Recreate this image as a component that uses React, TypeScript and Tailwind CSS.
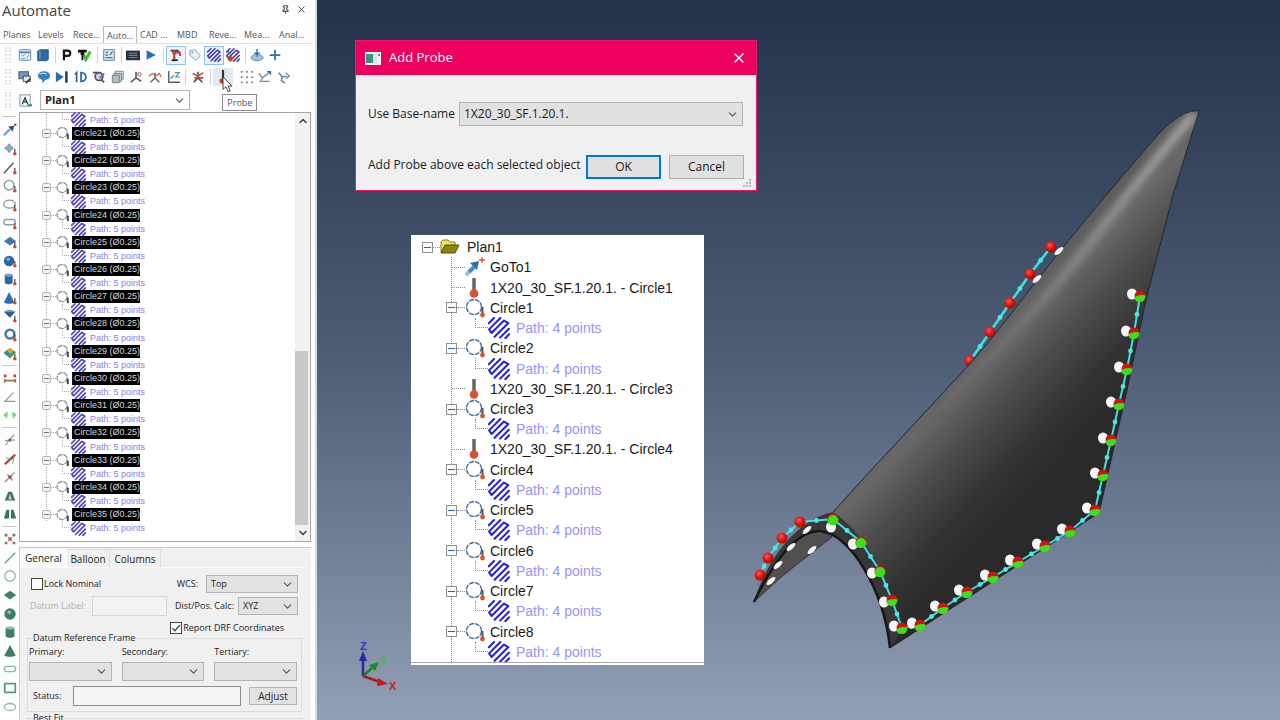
import type { ReactNode } from "react"
import { ChevronDown, ChevronUp, Pin, X } from "lucide-react"

/* ---------- small shared pieces ---------- */

function Icon({ size = "size-4", children }: { size?: string; children: ReactNode }) {
  return (
    <svg viewBox="0 0 16 16" className={`${size} shrink-0`} fill="none" aria-hidden="true">
      {children}
    </svg>
  )
}

// hatch pattern used for every scan path
function PathGlyph({ color, width = 1.8 }: { color: string; width?: number }) {
  return (
    <g stroke={color} strokeWidth={width} strokeLinecap="round" strokeLinejoin="round">
      <path d="M.6 4.600 4.400.8M9 .8.8 9l1.800 2.600 9-9 3.200 1.800-10 10M8.800 15l6.400-6.400M12.600 15.400l2.800-2.800" />
    </g>
  )
}

function Combo({ id, value, className, textClass = "text-[9px]", label }: {
  id: string
  value: string
  className: string
  textClass?: string
  label?: string
}) {
  return (
    <div className={`flex items-center border border-[#b4b4b4] ${className}`}>
      <select
        id={id}
        aria-label={label}
        defaultValue={value}
        className={`min-w-0 flex-1 appearance-none bg-transparent pl-1 text-[#1c1c1c] outline-none ${textClass}`}
      >
        <option>{value}</option>
      </select>
      <ChevronDown className="pointer-events-none mr-[3px] size-[13px] shrink-0 text-[#555]" strokeWidth={2} />
    </div>
  )
}

function Check({ id, label, checked = false }: { id: string; label: string; checked?: boolean }) {
  return (
    <label htmlFor={id} className="flex items-center gap-px text-[#222]">
      <span className="grid size-3 place-items-center">
        <input
          id={id}
          type="checkbox"
          defaultChecked={checked}
          className="peer col-start-1 row-start-1 size-3 appearance-none border border-[#444] bg-white"
        />
        <svg viewBox="0 0 12 12" className="pointer-events-none col-start-1 row-start-1 hidden size-3 peer-checked:block" fill="none" stroke="#444" strokeWidth="1.3">
          <path d="M2.5 6.2 5 8.7 10 3" />
        </svg>
      </span>
      {label}
    </label>
  )
}

/* ---------- toolbar icons ---------- */

const blue = "#2f6ea8"
const gray = "#6f7f86"
const red = "#c8402f"

const topIcons: Record<string, ReactNode> = {
  plan: <><rect x="1.5" y="2" width="13" height="12" rx="1" fill="#e8f2fa" stroke="#4b7da5" /><path d="M2 5h12" stroke="#4b7da5" strokeWidth="2" /><path d="M4 8l1.5 1.5L8 7M9.500 12l3-4M4 12h4" stroke="#5a8bb0" /></>,
  book: <><path d="M2 3.500 4.500 2H14v11l-2 1.500H2z" fill="#2b6ca8" stroke="#1d4e7f" /><path d="M4.500 2v11" stroke="#83b2da" /></>,
  p: <path d="M4.500 14V3h4.200c4 0 4 6 0 6H5" stroke="#111" strokeWidth="2.500" />,
  flag: <><path d="M6 7l3 6 5-9" stroke="#43b543" strokeWidth="3.500" /><path d="M0 2h10v3H7v3H6v6H4V8H3V5H0z" fill="#111" /></>,
  report: <><rect x="2" y="2" width="12" height="12" fill="#dcebf5" stroke="#4f7590" /><path d="M4 5h3M4 11h8M9 8l3-4M4 8h3" stroke="#4f7590" strokeWidth="1.500" /></>,
  film: <><rect x="0" y="3" width="16" height="11" fill="#27313c" /><path d="M3 6h10M3 8.500h10M3 11h10" stroke="#6da0cf" /></>,
  play: <path d="M3 2.500 13.500 8 3 13.500z" fill={blue} />,
  robot: <><path d="M6 14V5h6l1 4" stroke="#a5522e" strokeWidth="2.500" /><path d="M2 3h9" stroke="#333" strokeWidth="2" /><circle cx="6" cy="5" r="2.500" fill={red} /><path d="M3 14h7" stroke="#222" strokeWidth="2" /></>,
  tag: <><path d="M2 3l6-1 6 7-5 5-7-6z" fill="#e6f0f8" stroke="#6f9cbf" /><circle cx="5" cy="5" r="1" fill="#6f9cbf" /></>,
  path: <PathGlyph color="#4b36b0" />,
  pathProbe: <><PathGlyph color="#4b36b0" /><path d="M1 3l4 4" stroke="#2d8a4b" strokeWidth="2" /><circle cx="5" cy="12" r="3" fill={red} /></>,
  probeStand: <><ellipse cx="8" cy="11" rx="7" ry="3.500" fill="#9fc3df" stroke="#5c8cb3" /><path d="M8 1v9M5 6h6" stroke={blue} strokeWidth="1.500" /></>,
  plus: <path d="M8 2v12M2 8h12" stroke={blue} strokeWidth="2" />,
  window: <><rect x="1" y="2" width="11" height="8" fill="#6f98ba" stroke="#35526b" /><rect x="6" y="7" width="8" height="6" fill="#dfe6ea" stroke="#444" /><path d="M9 15l5-5" stroke="#333" strokeWidth="2" /></>,
  bubble: <><ellipse cx="8" cy="6.500" rx="7" ry="5" fill="#3682bf" /><path d="M6 10v5l4-4" fill="#3682bf" /><path d="M3 5c2-2 6-2 8 0" stroke="#b8dcf3" strokeWidth="1.500" /></>,
  step: <><path d="M1 2 10 8 1 14z" fill="#2b6ca8" /><path d="M13 1.500v13" stroke="#25496b" strokeWidth="3" /></>,
  oneD: <path d="M1 5 3 3v11M8 3v10c7.500 0 7.500-10 0-10z" stroke="#2b6ca8" strokeWidth="2" />,
  lens: <><circle cx="8" cy="7.500" r="4.500" fill="#cbd0e6" stroke="#5a4a66" strokeWidth="1.800" /><path d="M1 3h6M10 11l4 3" stroke="#6b4652" strokeWidth="1.800" /><path d="M9 9l5-5" stroke="#6d5fc4" strokeWidth="2" /></>,
  boxes: <><path d="M5 1.500h9v9H5z" fill="#d4dde2" stroke={gray} /><path d="M3 4h9v9H3z" fill="#c2ced6" stroke={gray} /><path d="M1.500 6h8v8.500h-8z" fill="#aebdc8" stroke={gray} /></>,
  axes: <><path d="M8 2v7L2 14M8 9l6 4" stroke="#4c565c" strokeWidth="1.800" /><circle cx="12" cy="5" r="2" stroke={red} /></>,
  axesFan: <><path d="M8 3v6l-5 5M8 9l5 5" stroke="#5c5450" strokeWidth="1.500" /><path d="M1 7l4-3 4 3 4-3 2 4" stroke="#d06a58" strokeWidth="1.500" /></>,
  graph: <><path d="M2 1v13h13" stroke="#4c6470" strokeWidth="1.600" /><path d="M4 10l4-4M9 3h5l-4 5h5" stroke="#3e95a8" strokeWidth="1.300" /></>,
  axesOrigin: <><path d="M8 2v7L3 14M8 9l5 5" stroke="#4c4c4c" strokeWidth="1.800" /><path d="M2 4l6 3 6-4M4 9h10" stroke={red} strokeWidth="1.800" /></>,
  probe: <><path d="M8 0v11" stroke="#333" strokeWidth="2.500" /><circle cx="7" cy="12.500" r="3" fill={red} /></>,
  dots: <path d="M1 1h2v2H1zM7 1h2v2H7zM13 1h2v2h-2zM1 7h2v2H1zM7 7h2v2H7zM13 7h2v2h-2zM1 13h2v2H1zM7 13h2v2H7zM13 13h2v2h-2z" fill="#6a8a78" />,
  cutA: <><path d="M1 4l4 5 9-7M6 8l-4 6M4 13h9" stroke="#7b8a90" strokeWidth="1.500" /><path d="M10 1h5v5z" fill={blue} /></>,
  cutB: <><path d="M2 3l4 5 5-1M6 8l-1 4 4 3" stroke="#4b84a6" strokeWidth="1.600" /><path d="M10 3l4 4-4 3" stroke="#6d8fa5" strokeWidth="1.600" /></>,
  sheet: <><rect x="2" y="2" width="11" height="12" fill="#f4f8fa" stroke="#7b96a8" /><path d="M4.500 12 7.500 5l3 7M5.500 9.500h4" stroke="#333" strokeWidth="1.300" /><path d="M10 13h5" stroke="#2d9a5b" strokeWidth="2" /></>,
}

const rowOne = ["plan", "book", "|", "p", "flag", "|", "report", "|", "film", "play", "|", "robot", "tag", "path", "pathProbe", "|", "probeStand", "plus"]
const rowTwo = ["window", "bubble", "step", "oneD", "lens", "boxes", "axes", "axesFan", "graph", "|", "axesOrigin", "|", "probe", "dots", "cutA", "cutB"]
const pressed = ["robot", "path"]

function Grip() {
  return <span className="mx-[5px] h-4 w-[6px] shrink-0 border-x-2 border-dotted border-[#e0e0e0]" />
}

function Toolbar({ items, width }: { items: string[]; width: string }) {
  return (
    <div className="flex h-[22px] items-center">
      <Grip />
      <div className={`flex items-center ${width}`}>
        {items.map((name, i) => {
          if (name === "|") {
            return (
              <span key={i} className="flex w-[6px] justify-center">
                <span className="h-4 w-px bg-[#d2d2d2]" />
              </span>
            )
          }
          if (name === "probe") {
            return (
              <div key={i} className="relative z-10 mr-1 w-5">
                <button aria-label="Probe" className="flex h-[18px] w-full items-center justify-center bg-[#dfeaf4]">
                  <Icon size="size-[14px]">{topIcons.probe}</Icon>
                </button>
                <svg viewBox="0 0 12 19" className="absolute left-[9px] top-2 z-20 h-[17px] w-[11px]" aria-hidden="true">
                  <path d="M1 1v14l3.200-3 2.300 5.500 2.500-1-2.300-5.300H11z" fill="#fff" stroke="#333" />
                </svg>
                <span role="tooltip" className="absolute left-[9px] top-[26px] border border-[#8c8c8c] bg-white px-1 text-[9px] leading-[15px] text-[#555]">
                  Probe
                </span>
              </div>
            )
          }
          return (
            <button
              key={i}
              aria-label={name}
              className={`flex h-[19px] min-w-0 flex-1 items-center justify-center ${pressed.includes(name) ? "border border-[#8fc4ea] bg-[#e9f4fc]" : ""}`}
            >
              <Icon size="size-[14px]">{topIcons[name]}</Icon>
            </button>
          )
        })}
      </div>
    </div>
  )
}

/* ---------- vertical strip ---------- */

const probeTip = <><path d="M13.500 8v4" stroke="#555" strokeWidth="1.500" /><circle cx="13.500" cy="13.500" r="2" fill="#d2452f" /></>
const green = "#3d7f68"
const paleGreen = "#8fb8a8"

const stripGroups: [string, ReactNode][][] = [
  [
    ["goto", <><path d="M1 14 8 7" stroke="#6ba3d0" strokeWidth="2.500" /><path d="M6 4l7-1-2 7z" fill="#245c93" /><circle cx="14" cy="2" r="1.500" fill={red} /></>],
    ["point", <><path d="M7 2v10M2 7h10" stroke="#7f9bad" strokeWidth="3" /><circle cx="7" cy="7" r="3.500" fill="#8fa8b8" />{probeTip}</>],
    ["line", <><path d="M1 14 12 2" stroke="#555" strokeWidth="1.500" />{probeTip}</>],
    ["circle", <><circle cx="7" cy="7" r="5.500" stroke="#7e97a3" strokeWidth="1.500" />{probeTip}</>],
    ["ellipse", <><ellipse cx="7.500" cy="7" rx="6.500" ry="4.500" stroke="#7e97a3" strokeWidth="1.500" />{probeTip}</>],
    ["slot", <><rect x="1" y="4" width="13" height="6" rx="3" stroke="#8b9ca5" strokeWidth="1.500" />{probeTip}</>],
    ["plane", <><path d="M8 2l7 5-7 5-7-5z" fill="#3b7ab3" />{probeTip}</>],
    ["sphere", <><circle cx="7" cy="8" r="6" fill="#2a68a3" /><circle cx="6" cy="6" r="2" fill="#79b0de" />{probeTip}</>],
    ["cylinder", <><path d="M2 3.500v9c2 2 7 2 9 0v-9z" fill="#2a68a3" /><ellipse cx="6.500" cy="3.500" rx="4.500" ry="1.800" fill="#6fa4d1" />{probeTip}</>],
    ["cone", <><path d="M7 1 13 13c-3 2-9 2-12 0z" fill="#2f6ea8" />{probeTip}</>],
    ["surface", <><path d="M1 3c4-2 9-2 13 0L8 10z" fill="#2a5f93" /><path d="M2 3h12" stroke="#86b5cf" />{probeTip}</>],
    ["torus", <><circle cx="8" cy="7" r="5" stroke="#4a7ba6" strokeWidth="3" />{probeTip}</>],
    ["map", <><path d="M8 1l7 5-7 7-7-7z" fill="#3c9f52" /><path d="M4 4l4-3 4 3-4 4z" fill="#e6a82a" /><path d="M1 7l4-3 3 4-2 3z" fill="#2e8bb8" />{probeTip}</>],
  ],
  [
    ["distance", <><path d="M2 9v4M14 9v4M2 11h12" stroke="#9a7546" strokeWidth="2" /><path d="M1 4h3v3H1zM12 4h3v3h-3z" fill={red} /></>],
    ["angle", <path d="M14 13H2L12 3" stroke="#8a9a94" strokeWidth="1.400" />],
    ["gap", <path d="M5 5 1.500 8 5 11M11 5l3.500 3L11 11M3 8h3M10 8h3" stroke="#6fd66f" strokeWidth="1.600" />],
  ],
  [
    ["bisect", <><path d="M3 14 7 8l6-6M2 9l5-1M9 8h5" stroke="#8aa09a" strokeWidth="1.400" /><circle cx="8" cy="8" r="1.800" fill={red} /></>],
    ["project", <><path d="M2 14 14 3" stroke="#a0412f" strokeWidth="2.500" /><path d="M3 7l9 2M13 3l-2 11" stroke="#7d9a91" /></>],
    ["intersect", <><path d="M2 14 13 3M5 5l6 7" stroke="#7d9a91" strokeWidth="1.500" /><circle cx="8" cy="8" r="2" fill={red} /></>],
    ["coneCut", <><path d="M6 3h4l4 10H2z" fill="#466f60" /><path d="M8 5l2 7H6z" fill="#c8d7d0" /></>],
    ["coneSplit", <path d="M4 3h3v10H1zM9 3h3l3 10H9z" fill="#3c7360" />],
  ],
  [
    ["points", <><path d="M2 2h3v3H2zM11 2h3v3h-3zM2 11h3v3H2zM11 11h3v3h-3z" fill="#777" /><path d="M6 6l4 4M10 6l-4 4" stroke={red} strokeWidth="1.500" /></>],
    ["nLine", <path d="M2 14 14 2" stroke="#6ca08d" strokeWidth="1.600" />],
    ["nCircle", <circle cx="8" cy="8" r="6" stroke={paleGreen} strokeWidth="1.500" />],
    ["nPlane", <path d="M8 3l7 5-7 5-7-5z" fill={green} />],
    ["nSphere", <><circle cx="8" cy="8" r="6.500" fill={green} /><circle cx="7" cy="6" r="2" fill="#8fc2ad" /></>],
    ["nCylinder", <><path d="M3 3v10c2 2 8 2 10 0V3z" fill={green} /><ellipse cx="8" cy="3.500" rx="5" ry="1.700" fill="#8fc2ad" /></>],
    ["nCone", <path d="M8 1l6.500 12c-3 2-10 2-13 0z" fill={green} />],
    ["nSlot", <rect x="1.500" y="5" width="13" height="6" rx="3" stroke={paleGreen} strokeWidth="1.500" />],
    ["nRect", <rect x="2" y="3" width="12" height="10" stroke="#5c9a84" strokeWidth="2" />],
    ["nEllipse", <ellipse cx="8" cy="8" rx="6.500" ry="4" stroke={paleGreen} strokeWidth="1.500" />],
  ],
]

function Strip() {
  return (
    <div className="flex w-[19px] shrink-0 flex-col pb-1 pt-1">
      <span className="mb-1 ml-[2px] h-px w-[14px] shrink-0 bg-[#c4c4c4]" />
      {stripGroups.flatMap((group, g) => [
        g > 0 && (
          <span key={`sep-${g}`} className="flex h-[6px] shrink-0 items-center">
            <span className="ml-[2px] h-px w-[15px] bg-[#c9c9c9]" />
          </span>
        ),
        ...group.map(([name, art]) => (
          <button key={name} aria-label={name} className="flex min-h-0 flex-1 items-center justify-center">
            <Icon size="size-[14px]">{art}</Icon>
          </button>
        )),
      ])}
    </div>
  )
}

/* ---------- left panel ---------- */

const panelTabs: [string, string][] = [
  ["Planes", "w-[35px]"],
  ["Levels", "w-[35px]"],
  ["Rece...", "w-[33px]"],
  ["Auto...", "w-[34px]"],
  ["CAD ...", "w-[37px]"],
  ["MBD", "w-[32px]"],
  ["Reve...", "w-[35px]"],
  ["Mea...", "w-[35px]"],
  ["Anal...", "w-[30px]"],
]

const circles = [21, 22, 23, 24, 25, 26, 27, 28, 29, 30, 31, 32, 33, 34, 35]

function SmallPathRow() {
  return (
    <li className="flex min-h-0 items-center">
      <span className="ml-[42px] h-full w-[9px] shrink-0">
        <span className="block h-1/2 w-full border-b border-l border-dotted border-[#aaa]" />
      </span>
      <Icon size="size-[15px]"><PathGlyph color="#5444bd" /></Icon>
      <span className="ml-1 text-[9px] leading-3 text-[#8a80e6]">Path: 5 points</span>
    </li>
  )
}

function SmallTree() {
  return (
    <div className="flex min-h-0 flex-1 border border-[#a5a5a5] bg-white">
      <ul className="relative grid min-w-0 flex-1 auto-rows-fr pb-[6px] font-['Liberation_Sans',Arial,sans-serif]">
        <span className="absolute bottom-[20px] left-[26px] top-0 border-l border-dotted border-[#aaa]" />
        <SmallPathRow />
        {circles.flatMap((n) => [
          <li key={n} className="relative flex min-h-0 items-center">
            <span className="ml-[22px] flex size-[9px] shrink-0 items-center justify-center rounded-xs border border-[#b5b5b5] bg-[#f3f3f3]">
              <span className="h-px w-[5px] bg-[#777]" />
            </span>
            <span className="w-[5px] shrink-0 border-t border-dotted border-[#aaa]" />
            <Icon size="size-[14px]">
              <circle cx="7" cy="7.500" r="5.800" stroke="#8494a0" strokeWidth="1.500" strokeDasharray="6 1" />
              <path d="M13.500 9v6" stroke="#444" strokeWidth="2.200" />
            </Icon>
            <span className="ml-[2px] w-[68px] shrink-0 whitespace-nowrap bg-black pl-[2px] text-[9px] leading-[13px] text-[#d6d6d6]">
              Circle{n} (Ø0.25)
            </span>
          </li>,
          <SmallPathRow key={`p${n}`} />,
        ])}
      </ul>
      <div className="flex w-[15px] shrink-0 flex-col items-center bg-[#f1f1f1]">
        <ChevronUp className="my-[2px] size-3 text-[#444]" strokeWidth={3} />
        <div className="flex w-full flex-1 flex-col">
          <span className="flex-[14]" />
          <span className="w-[13px] flex-[11] bg-[#c8c8c8]" />
        </div>
        <ChevronDown className="my-[2px] size-3 text-[#444]" strokeWidth={3} />
      </div>
    </div>
  )
}

function Properties() {
  return (
    <section className="mt-[5px] h-[173px] shrink-0 overflow-hidden border-l border-t border-[#c9c9c9] bg-[#f0f0f0] pt-px text-[9px] leading-3 text-[#222]">
      <div role="tablist" className="flex h-[18px] items-stretch text-[10px] font-medium">
        <button role="tab" aria-selected="true" className="w-[47px] bg-[#fafafa]">General</button>
        <button role="tab" className="w-[43px] border-r border-t border-[#dcdcdc]">Balloon</button>
        <button role="tab" className="w-[51px] border-r border-t border-[#dcdcdc]">Columns</button>
      </div>
      <div className="mr-1 border-t border-[#fafafa] pl-[7px] pr-[5px]">
        <div className="mt-[7px] flex h-[18px] items-center pl-1 pr-1">
          <Check id="lock" label="Lock Nominal" />
          <label htmlFor="wcs" className="ml-auto mr-2">WCS:</label>
          <Combo id="wcs" value="Top" className="h-[18px] w-[92px] bg-[#e2e2e2]" />
        </div>
        <div className="mt-[3px] flex h-5 items-center pl-[3px] pr-1">
          <label htmlFor="datum" className="w-[62px] text-[#b3b3b3]">Datum Label:</label>
          <input id="datum" type="text" disabled className="h-5 w-[75px] border border-[#d6d6d6] bg-[#f2f2f2]" />
          <label htmlFor="calc" className="ml-auto mr-1">Dist/Pos. Calc:</label>
          <Combo id="calc" value="XYZ" className="h-[18px] w-[60px] bg-[#e2e2e2]" />
        </div>
        <div className="mt-[6px] flex justify-end pr-[18px]">
          <Check id="drf" label="Report DRF Coordinates" checked />
        </div>
        <fieldset className="-mt-px border border-[#dcdcdc] pb-[5px]">
          <legend className="ml-[5px] leading-[10px]">Datum Reference Frame</legend>
          <div className="grid grid-cols-3 gap-x-[10px] pl-px pr-1 pt-[3px]">
            {["Primary:", "Secondary:", "Tertiary:"].map((name) => (
              <div key={name}>
                <label htmlFor={name}>{name}</label>
                <Combo id={name} value="" className="mt-1 h-[19px] bg-[#e2e2e2]" />
              </div>
            ))}
          </div>
          <div className="mt-[5px] flex items-center pl-[5px] pr-1">
            <label htmlFor="status" className="w-10">Status:</label>
            <input id="status" type="text" className="h-5 min-w-0 flex-1 border border-[#8e8e8e] bg-[#f5f5f5]" />
            <button className="ml-2 h-[18px] w-12 border border-[#b4b4b4] bg-[#e2e2e2] text-[10px]">Adjust</button>
          </div>
        </fieldset>
        <fieldset className="border border-[#dcdcdc]">
          <legend className="ml-[5px]">Best Fit</legend>
        </fieldset>
      </div>
    </section>
  )
}

function AutomatePanel() {
  return (
    <aside className="flex w-[317px] shrink-0 flex-col overflow-hidden border-r-2 border-[#d5dbe2] bg-[#fdfdfd] pr-[2px] font-['Open_Sans','Noto_Sans',sans-serif]">
      <header className="flex h-[26px] shrink-0 items-start pl-[2px]">
        <h1 className="flex-1 text-[15px] leading-5 text-[#444]">Automate</h1>
        <button aria-label="Pin" className="mt-[5px]"><Pin className="size-[9px] text-[#555]" strokeWidth={3} /></button>
        <button aria-label="Close" className="ml-[6px] mr-[6px] mt-1"><X className="size-[11px] text-[#444]" strokeWidth={2} /></button>
      </header>
      <nav className="flex h-[18px] shrink-0 border-b border-[#e0e0e0] text-[9px] leading-[18px] text-[#555]">
        {panelTabs.map(([name, width]) => (
          <button
            key={name}
            className={`shrink-0 overflow-hidden whitespace-nowrap pl-[3px] text-left ${width} ${name === "Auto..." ? "border border-b-0 border-[#bbb]" : ""}`}
          >
            {name}
          </button>
        ))}
      </nav>
      <Toolbar items={rowOne} width="w-[268px]" />
      <Toolbar items={rowTwo} width="w-[277px]" />
      <div className="flex h-6 shrink-0 items-center">
        <Grip />
        <button aria-label="Sheet" className="ml-[2px] mr-[7px]"><Icon size="size-[15px]">{topIcons.sheet}</Icon></button>
        <Combo id="plan" label="Plan" value="Plan1" className="h-5 w-[150px] bg-white" textClass="text-[11px] font-bold" />
      </div>
      <div className="flex min-h-0 flex-1">
        <Strip />
        <div className="mr-[2px] flex min-w-0 flex-1 flex-col">
          <SmallTree />
          <Properties />
        </div>
      </div>
    </aside>
  )
}

/* ---------- dialog ---------- */

function AddProbeDialog() {
  return (
    <section role="dialog" aria-label="Add Probe" className="w-[402px] border border-[#ee1a6b] bg-[#f0f0f0] font-['Open_Sans','Noto_Sans',sans-serif] text-[12px] text-[#1a1a1a]">
      <header className="flex h-[34px] items-center bg-[#ee005f] px-[9px] text-white">
        <svg viewBox="0 0 16 13" className="mr-2 h-[13px] w-4">
          <rect width="16" height="13" fill="#eef3f3" />
          <rect x="1" y="2" width="7" height="9" fill="#3f8f86" />
          <rect x="8" y="2" width="4" height="9" fill="#dbe3e6" />
          <rect x="13" y="2" width="2" height="2" fill="#5a8fa8" />
        </svg>
        <h2 className="flex-1 text-[13px]">Add Probe</h2>
        <button aria-label="Close"><X className="size-4" strokeWidth={2} /></button>
      </header>
      <div className="flex items-center pl-3 pr-[13px] pt-[27px]">
        <label htmlFor="base" className="w-[91px]">Use Base-name</label>
        <Combo id="base" value="1X20_30_SF.1.20.1." className="h-6 flex-1 bg-[#e1e1e1]" textClass="text-[12px]" />
      </div>
      <div className="mt-[29px] flex items-center pl-3 pr-3">
        <span className="flex-1 whitespace-nowrap pb-1">Add Probe above each selected object</span>
        <button className="h-6 w-[75px] border-2 border-[#0078d7] bg-[#e1e1e1]">OK</button>
        <button className="ml-2 h-6 w-[75px] border border-[#adadad] bg-[#e1e1e1]">Cancel</button>
      </div>
      <div className="flex justify-end pb-px pr-1">
        <svg viewBox="0 0 10 10" className="size-[10px]" fill="#b5b5b5">
          <path d="M7 0h2v2H7zM4 3h2v2H4zM7 3h2v2H7zM1 6h2v2H1zM4 6h2v2H4zM7 6h2v2H7z" />
        </svg>
      </div>
    </section>
  )
}

/* ---------- plan tree ---------- */

type Row = { kind: "goto" | "probe" | "circle" | "path"; text: string }

const probeRow = (n: number): Row => ({ kind: "probe", text: `1X20_30_SF.1.20.1. - Circle${n}` })
const circleRows = (n: number): Row[] => [
  { kind: "circle", text: `Circle${n}` },
  { kind: "path", text: "Path: 4 points" },
]

const planRows: Row[] = [
  { kind: "goto", text: "GoTo1" },
  probeRow(1),
  ...circleRows(1),
  ...circleRows(2),
  probeRow(3),
  ...circleRows(3),
  probeRow(4),
  ...circleRows(4),
  ...circleRows(5),
  ...circleRows(6),
  ...circleRows(7),
  ...circleRows(8),
]

function Toggle() {
  return (
    <button aria-label="Collapse" className="relative flex size-[11px] shrink-0 items-center justify-center border border-[#8f8f8f] bg-[#fbfbfb]">
      <span className="h-px w-[7px] bg-[#3b5bb5]" />
    </button>
  )
}

function PlanRow({ row }: { row: Row }) {
  if (row.kind === "path") {
    return (
      <li className="flex min-h-0 items-center">
        <span className="ml-[64px] h-full w-[13px] shrink-0">
          <span className="block h-1/2 w-full border-b border-l border-dotted border-[#888]" />
        </span>
        <Icon size="size-[22px]"><PathGlyph color="#2222e0" width={1.5} /></Icon>
        <span className="ml-[6px] text-[#9a92f8]">{row.text}</span>
      </li>
    )
  }
  return (
    <li className="flex min-h-0 items-center whitespace-nowrap">
      {row.kind === "circle" ? (
        <>
          <span className="ml-[35px] flex"><Toggle /></span>
          <span className="w-[8px] border-t border-dotted border-[#888]" />
        </>
      ) : (
        <span className="ml-[41px] w-[13px] border-t border-dotted border-[#888]" />
      )}
      <svg viewBox="0 0 20 20" className="mr-[5px] size-5 shrink-0" fill="none">
        {row.kind === "goto" && (
          <>
            <path d="M1 18l3-3" stroke="#8fbbe0" strokeWidth="4" />
            <path d="M4 15l5-5" stroke="#4b8ac4" strokeWidth="4" />
            <path d="M5 6l9-2-2 9z" fill="#2f6ea8" />
            <path d="M17 0v6M14 3h6" stroke="#e04a32" strokeWidth="1.300" />
          </>
        )}
        {row.kind === "probe" && (
          <>
            <path d="M9 0v13" stroke="#666" strokeWidth="3.500" />
            <circle cx="9" cy="15.500" r="4.300" fill="#dd4f30" />
          </>
        )}
        {row.kind === "circle" && (
          <>
            <circle cx="9" cy="9" r="7.500" stroke="#3d668e" strokeWidth="1.300" strokeDasharray="5 1" />
            <path d="M17.500 9v7" stroke="#555" strokeWidth="2" />
            <circle cx="17.500" cy="17" r="2.400" fill="#dd4f30" />
          </>
        )}
      </svg>
      {row.text}
    </li>
  )
}

function PlanTree() {
  return (
    <section className="flex h-[430px] w-[293px] flex-col bg-white">
      <ul className="relative grid min-h-0 flex-1 auto-rows-fr overflow-hidden border-b border-[#a9a9a9] pt-[2px] font-['Liberation_Sans',Arial,sans-serif] text-[14px] leading-5 text-[#1b1b1b]">
        <span className="absolute bottom-0 left-[40px] top-[22px] border-l border-dotted border-[#888]" />
        <li className="flex min-h-0 items-center">
          <span className="ml-[11px] flex"><Toggle /></span>
          <span className="w-[7px] border-t border-dotted border-[#888]" />
          <svg viewBox="0 0 20 16" className="mr-[7px] h-4 w-5" fill="none">
            <path d="M1 13V3l2-2h5l2 2h5v3" fill="#f0e65a" stroke="#84801c" />
            <path d="M1 14 5 6h14l-4 8z" fill="#8c8612" stroke="#4f4c0c" />
          </svg>
          Plan1
        </li>
        {planRows.map((row, i) => <PlanRow key={i} row={row} />)}
      </ul>
      <span className="h-[2px] shrink-0" />
    </section>
  )
}

/* ---------- 3D view ---------- */

const leadingEdge: [number, number][] = [[1051, 247], [1030, 274], [1010, 303], [990, 332], [970, 361]]
const rimReds: [number, number][] = [[760, 575], [768, 558], [782, 538], [800, 522]]
const taggedPoints: [number, number][] = [
  [833, 519], [861, 542], [880, 571], [892, 600], [902, 628], [920, 625], [943, 608], [967, 592], [993, 577],
  [1018, 562], [1045, 546], [1070, 531], [1095, 510], [1103, 475], [1111, 440], [1119, 404], [1127, 369], [1134, 333], [1140, 296],
]
const slots: [number, number][] = [[807, 530], [791, 547], [778, 565], [771, 581], [812, 550], [1059, 251], [1037, 279]]

const skinPath = "M1199 111C1184 110 1168 122 1150 144C1110 190 1075 232 1045 270C1015 308 995 336 965 369L940 396L862 480L833 512C868 535 892 585 902 630L890 648L1099 513L1127 390L1146 300L1173 195Z"

const toPoints = (list: [number, number][]) => list.map((p) => p.join(",")).join(" ")

// small beads that sit between neighbouring points of a scan path
function Beads({ list }: { list: [number, number][] }) {
  return (
    <g fill="#4fe6e6">
      {list.slice(1).map(([x, y], i) => (
        <circle key={i} cx={(x + list[i][0]) / 2} cy={(y + list[i][1]) / 2} r="2.400" />
      ))}
    </g>
  )
}

function Scene() {
  return (
    <svg viewBox="317 0 963 720" className="absolute inset-0 h-full w-full" aria-label="Part model">
      <defs>
        <linearGradient id="skin" gradientUnits="userSpaceOnUse" x1="965" y1="352" x2="1070" y2="452">
          <stop offset="0" stopColor="#5c5c5c" />
          <stop offset="0.14" stopColor="#686868" />
          <stop offset="0.4" stopColor="#4e4e4e" />
          <stop offset="0.75" stopColor="#333" />
          <stop offset="1" stopColor="#2a2a2a" />
        </linearGradient>
        <linearGradient id="ridge" gradientUnits="userSpaceOnUse" x1="1185" y1="122" x2="940" y2="420">
          <stop offset="0" stopColor="#bdbdbd" />
          <stop offset="0.45" stopColor="#929292" />
          <stop offset="1" stopColor="#6a6a6a" stopOpacity="0" />
        </linearGradient>
        <radialGradient id="ball" cx="0.4" cy="0.35" r="0.7">
          <stop offset="0" stopColor="#ff5a4a" />
          <stop offset="0.5" stopColor="#e01414" />
          <stop offset="1" stopColor="#a00808" />
        </radialGradient>
        <filter id="soft" x="-20%" y="-20%" width="140%" height="140%">
          <feGaussianBlur stdDeviation="4" />
        </filter>
        <clipPath id="bodyClip">
          <path d={skinPath} />
        </clipPath>
      </defs>

      <polyline points={toPoints(leadingEdge)} stroke="#45dede" strokeWidth="2.500" fill="none" />
      <Beads list={leadingEdge} />
      {leadingEdge.map(([x, y]) => <circle key={x} cx={x} cy={y} r="5.500" fill="url(#ball)" />)}

      {/* inner face and rim */}
      <path d="M754 602C770 560 795 530 820 531L832 537L800 562L781 577Z" fill="#505050" stroke="#333" />
      <path d="M754 602C766 562 795 520 833 512C860 525 905 585 915 632L890 648C885 590 850 533 820 531C795 530 772 565 754 602Z" fill="#383838" />

      <path d={skinPath} fill="url(#skin)" />
      <path d="M833 512 862 480 940 396 965 369C995 336 1015 308 1045 270C1075 232 1110 190 1150 144C1168 122 1184 110 1199 111L1173 195 1146 300 1127 390 1099 513 890 648" fill="none" stroke="#262626" />
      <g clipPath="url(#bodyClip)">
        <path d="M1194 114C1165 148 1125 198 1090 243S1010 340 930 425" stroke="url(#ridge)" strokeWidth="7" fill="none" filter="url(#soft)" />
      </g>
      <path d="M754 602C772 565 795 530 820 531C850 533 884 590 890 648" stroke="#161616" strokeWidth="2.500" fill="none" />

      {slots.map(([x, y]) => (
        <ellipse key={x} cx={x} cy={y} rx="5.500" ry="2.300" fill="#f4f4f4" transform={`rotate(-42 ${x} ${y})`} />
      ))}

      <polyline points={toPoints([...rimReds, ...taggedPoints])} stroke="#45dede" strokeWidth="2" fill="none" />
      <Beads list={[...rimReds, ...taggedPoints]} />
      {taggedPoints.map(([x, y], i) => (
        <g key={i}>
          <ellipse cx={i === 0 ? x - 2 : x - 8} cy={i === 0 ? y + 8 : y - 2 + (i < 4 ? 4 : 0)} rx="5" ry="5.500" fill="#f6f6f6" />
          <circle cx={x} cy={y} r="5.500" fill="#d21212" />
          <path d={`M${x - 5.5} ${y + 1}q5.500 -3 11 -1.500q0 6 -5.500 6.500t-5.500 -5z`} fill="#3be01a" />
          {i < 3 && <circle cx={x} cy={y + 1} r="5" fill="#3be01a" />}
        </g>
      ))}
      {rimReds.map(([x, y]) => <circle key={x} cx={x} cy={y} r="5.500" fill="url(#ball)" />)}

      {/* axis triad */}
      <g strokeWidth="2.500" fontFamily="Liberation Sans, Arial, sans-serif" fontSize="11" fontWeight="700">
        <path d="M363 676V658" stroke="#2a2a9c" />
        <path d="M359 661l4-10 4 10z" fill="#2a2a9c" />
        <text x="360" y="650" fill="#2b34d4">Z</text>
        <path d="M363 676l9-8" stroke="#1c7a28" />
        <path d="M369 665l10-3-4 9z" fill="#1c8a28" />
        <text x="380" y="665" fill="#35c23a">Y</text>
        <path d="M363 676l17 6" stroke="#a81c1c" />
        <path d="M378 678l10 6-11 2z" fill="#c41a1a" />
        <text x="389" y="690" fill="#d01c1c">X</text>
      </g>
    </svg>
  )
}

export default function App() {
  return (
    <div className="flex h-screen overflow-hidden">
      <AutomatePanel />
      <main className="relative min-w-0 flex-1 bg-linear-to-b from-[#22324b] via-[#4f5e77] to-[#92a0b6]">
        <Scene />
        <div className="relative pl-[38px] pt-10">
          <AddProbeDialog />
          <div className="ml-14 mt-11">
            <PlanTree />
          </div>
        </div>
      </main>
    </div>
  )
}
